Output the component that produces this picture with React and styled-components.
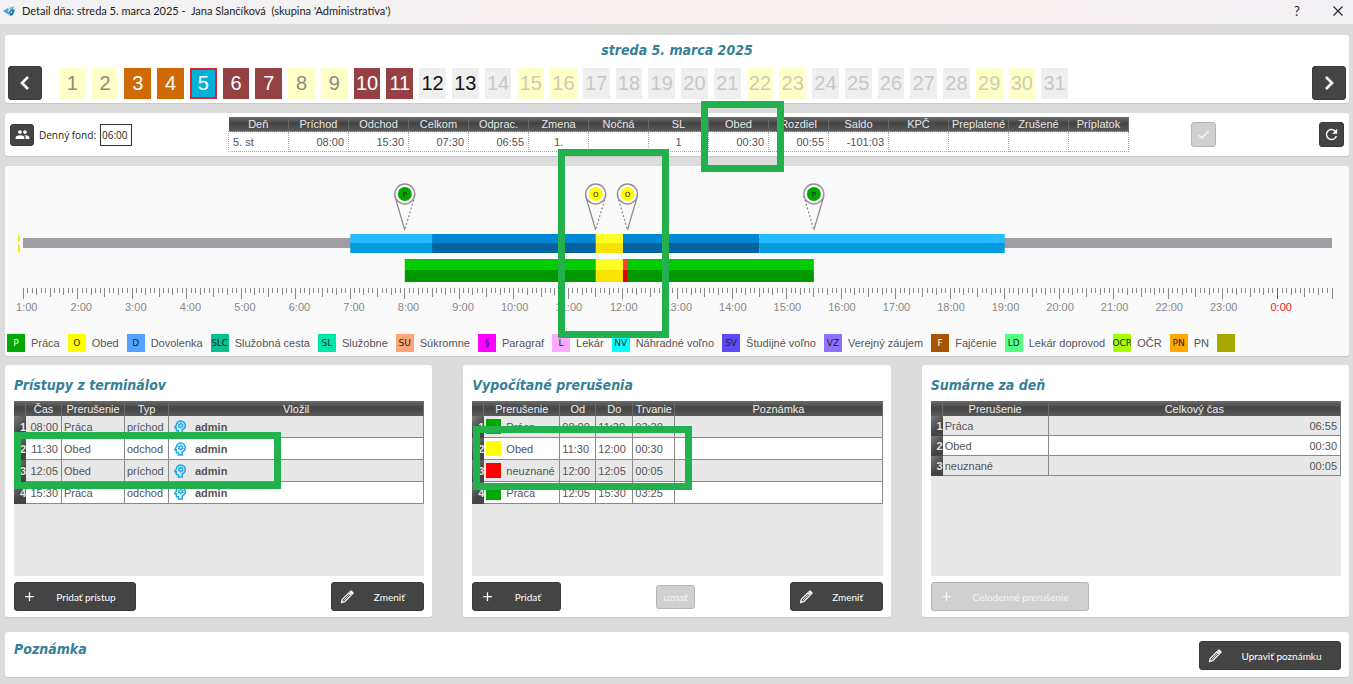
import React, { useState } from 'react';
import styled, { createGlobalStyle, css } from 'styled-components';
import { MdGroup, MdCheck, MdRefresh, MdAdd, MdOutlinePsychology } from 'react-icons/md';

const GlobalStyle = createGlobalStyle`
	*, *::before, *::after {
		box-sizing: border-box;
	}
	body {
		margin: 0;
		background: #dcdcdc;
		font-family: 'Liberation Sans', Arial, sans-serif;
		font-size: 11px;
		color: #555;
	}
	button, input {
		font: inherit;
		margin: 0;
	}
`;

const TitleBar = styled.header`
	display: flex;
	align-items: center;
	height: 24px;
	padding: 0 10px 3px 3px;
	background: linear-gradient(90deg, #f1f2f5, #f8f0ef 50%, #f8efef 70%, #f2f1f5);
	color: #222;
	font-family: Lato, 'Open Sans', sans-serif;
`;

const WindowTitle = styled.h1`
	flex: 1;
	margin: 0 0 0 5px;
	font-size: 11px;
	font-weight: 400;
	white-space: pre;
`;

const WindowButton = styled.button`
	display: flex;
	align-items: center;
	justify-content: center;
	width: 10px;
	height: 20px;
	margin-left: 31px;
	padding: 0;
	border: 0;
	background: none;
	color: #222;
	font-size: 13px;
`;

const Page = styled.main`
	display: flex;
	flex-direction: column;
	gap: 10px;
	padding: 11px 4px 7px 5px;
`;

const Panel = styled.section`
	border-radius: 3px;
	background: #fff;
	box-shadow: 0 1px 1px #c8c8c8;
`;

const Heading = styled.h2`
	margin: 0;
	color: #358097;
	font-family: 'DejaVu Sans Condensed', 'DejaVu Sans', sans-serif;
	font-size: 14px;
	font-stretch: condensed;
	font-style: italic;
	font-weight: 700;
	line-height: 16px;
`;

const CalendarPanel = styled(Panel)`
	height: 68px;
	padding: 7px 3px 3px;
	text-align: center;
`;

const CalendarRow = styled.div`
	display: flex;
	align-items: center;
	margin-top: 8px;
`;

const DarkButton = styled.button`
	display: flex;
	align-items: center;
	justify-content: center;
	flex: none;
	width: ${({ $w }) => $w}px;
	height: ${({ $h }) => $h}px;
	padding: 0;
	border: 1px solid #3a3a3a;
	border-radius: 3px;
	background: #444;
	color: #fff;

	&:disabled {
		border-color: #b4b4b4;
		background: #d0d0d0;
		color: #f4f4f4;
	}
`;

const Days = styled.div`
	flex: 1;
	display: grid;
	grid-template-columns: repeat(31, 1fr);
	gap: 6px;
	margin: 0 244px 0 17px;
`;

const dayColors = {
	weekend: ['#ffffc8', '#8c8c7c'],
	orange: ['#d06a04', '#fff'],
	red: ['#954143', '#fff'],
	current: ['#00b0d8', '#fff'],
	plain: ['#efefef', '#111'],
	future: ['#efefef', '#c8c8c8'],
	futureWeekend: ['#ffffc8', '#cdcdb4'],
};

const Day = styled.button`
	height: 31px;
	padding: 0;
	border: ${({ $type }) => ($type === 'current' ? '2px solid #e0202c' : '0')};
	background: ${({ $type }) => dayColors[$type][0]};
	color: ${({ $type }) => dayColors[$type][1]};
	font-size: 20px;
	line-height: 20px;
`;

const SummaryPanel = styled(Panel)`
	display: flex;
	align-items: center;
	height: 43px;
	padding: 0 5px;
`;

const FondLabel = styled.label`
	display: flex;
	align-items: center;
	gap: 4px;
	width: 194px;
	padding-left: 5px;
	color: #222;
	font-family: 'Open Sans', 'Noto Sans', sans-serif;
	font-size: 10px;
`;

const FondInput = styled.input`
	width: 32px;
	height: 22px;
	padding: 0 1px;
	border: 1px solid #333;
	background: #fff;
	color: #222;
`;

const Spacer = styled.div`
	flex: ${({ $grow = 1 }) => $grow};
`;

const TableWrap = styled.div`
	position: relative;
`;

const headBackground = 'linear-gradient(#6c6c6c, #444 45%, #5a5a5a)';

const SummaryTable = styled.table`
	width: 901px;
	border-collapse: collapse;
	table-layout: fixed;

	th {
		height: 15px;
		padding: 0;
		background: ${headBackground};
		border-right: 1px solid #6a6a6a;
		color: #e8e8e8;
		font-weight: 400;
		line-height: 14px;
	}
	td {
		height: 20px;
		padding: 0 4px;
		border: 1px dotted #aaa;
		line-height: 14px;
		white-space: nowrap;
	}
`;

const SummaryCell = styled.td`
	text-align: ${({ $align }) => $align || 'right'};
`;

// green frame drawn over the parts being explained
const Highlight = styled.div`
	position: absolute;
	z-index: 2;
	border: 7px solid #22b14c;
	pointer-events: none;
	${({ $box: [left, top, width, height] }) => css`
		left: ${left}px;
		top: ${top}px;
		width: ${width}px;
		height: ${height}px;
	`}
`;

const RangeHighlight = styled.div`
	position: absolute;
	z-index: 2;
	top: -17px;
	height: 189px;
	border: 7px solid #22b14c;
	pointer-events: none;
`;

const TimelinePanel = styled(Panel)`
	height: 190px;
	margin-bottom: -1px;
	background: #fafafa;
`;

const ChartArea = styled.div`
	position: relative;
	margin: 0 17px 0 18px;
`;

const Chart = styled.svg`
	display: block;
	width: 100%;
	height: 168px;
	overflow: visible;
`;

const AxisText = styled.text`
	fill: ${({ $red }) => ($red ? '#e81c24' : '#888')};
	font-size: 11px;
`;

const PinText = styled.text`
	fill: #222;
	font-family: 'DejaVu Sans', sans-serif;
	font-size: 7px;
	text-anchor: middle;
`;

const Legend = styled.ul`
	display: flex;
	gap: 8px;
	margin: 0;
	padding: 0 2px;
	list-style: none;
`;

const LegendItem = styled.li`
	display: flex;
	align-items: center;
	gap: 6px;
	white-space: nowrap;
`;

const LegendMark = styled.span`
	display: flex;
	justify-content: center;
	width: 18px;
	height: 18px;
	overflow: hidden;
	background: ${({ $color }) => $color};
	color: ${({ $light }) => ($light ? '#fff' : '#222')};
	font-family: 'DejaVu Sans', sans-serif;
	font-size: 9px;
	line-height: 19px;
`;

const Cards = styled.div`
	display: grid;
	grid-template-columns: repeat(3, 1fr);
	gap: 31px;
`;

const Card = styled(Panel)`
	display: flex;
	flex-direction: column;
	height: 252px;
	padding: 12px 8px 6px 9px;
`;

const TableArea = styled.div`
	position: relative;
	flex: 1;
	margin: 8px 0 6px;
	background: #e8e8e8;
`;

const DataTable = styled.table`
	width: 100%;
	border-collapse: separate;
	border-spacing: 0;
	table-layout: fixed;

	thead th {
		height: 15px;
		padding: 0;
		background: ${headBackground};
		border-right: 1px solid #6a6a6a;
		color: #eee;
		font-weight: 400;
		line-height: 14px;
		white-space: nowrap;
	}
	tbody th {
		padding: 0;
		background: linear-gradient(135deg, #7c7c7c, #444 60%);
		color: #e4e4e4;
		font-weight: 700;
		text-align: right;
		line-height: 14px;
	}
	td {
		height: ${({ $row }) => $row}px;
		padding: 0 2px;
		border-right: 1px solid #888;
		border-bottom: 1px solid #888;
		line-height: 14px;
		white-space: nowrap;
	}
	tbody tr:nth-child(even) td {
		background: #fff;
	}
`;

const NumberCell = styled.td`
	&& {
		padding-right: 3px;
	}
	text-align: right;
`;

const IconCell = styled.div`
	display: flex;
	align-items: center;
	gap: ${({ $gap }) => $gap}px;

	svg {
		flex: none;
		color: #1ca8f0;
	}
`;

const Swatch = styled.span`
	flex: none;
	width: 15px;
	height: 15px;
	background: ${({ $color }) => $color};
`;

const Actions = styled.div`
	display: flex;
	align-items: center;
	justify-content: space-between;
`;

const ActionButton = styled(DarkButton)`
	justify-content: flex-start;
	padding-left: 7px;
	font-family: Lato, 'Open Sans', sans-serif;
	font-size: 10px;

	span {
		flex: 1;
		text-align: center;
	}
`;

const SmallButton = styled(DarkButton)`
	font-family: Lato, 'Open Sans', sans-serif;
	font-size: 10px;
`;

const NotePanel = styled(Panel)`
	display: flex;
	align-items: flex-start;
	justify-content: space-between;
	height: 45px;
	margin-top: 5px;
	padding: 9px 8px 6px 9px;
`;

const dayType = (day) => {
	if (day === 5) return 'current';
	if (day === 3 || day === 4) return 'orange';
	if ([6, 7, 10, 11].includes(day)) return 'red';
	if ([1, 2, 8, 9].includes(day)) return 'weekend';
	if (day === 12 || day === 13) return 'plain';
	return [15, 16, 22, 23, 29, 30].includes(day) ? 'futureWeekend' : 'future';
};

const summary = [
	['Deň', '5. st', 'left'],
	['Príchod', '08:00'],
	['Odchod', '15:30'],
	['Celkom', '07:30'],
	['Odprac.', '06:55'],
	['Zmena', '1.', 'center'],
	['Nočná', ''],
	['SL', '1', 'center'],
	['Obed', '00:30'],
	['Rozdiel', '00:55'],
	['Saldo', '-101:03'],
	['KPČ', ''],
	['Preplatené', ''],
	['Zrušené', ''],
	['Príplatok', ''],
];

const legend = [
	['P', 'Práca', '#00a800', true],
	['O', 'Obed', '#ffff00'],
	['D', 'Dovolenka', '#54a4ff'],
	['SLC', 'Služobná cesta', '#08c090'],
	['SL', 'Služobne', '#00e8a8'],
	['SU', 'Súkromne', '#ffa478'],
	['§', 'Paragraf', '#ff00ff'],
	['L', 'Lekár', '#ffa8ff'],
	['NV', 'Náhradné voľno', '#00ffff'],
	['SV', 'Študijné voľno', '#5c4cf8'],
	['VZ', 'Verejný záujem', '#9070ff'],
	['F', 'Fajčenie', '#a85400', true],
	['LD', 'Lekár doprovod', '#54ff84'],
	['OCR', 'OČR', '#a8ff00'],
	['PN', 'PN', '#ffa800'],
	['', '', '#a8a800'],
];

const accesses = [
	['08:00', 'Práca', 'príchod'],
	['11:30', 'Obed', 'odchod'],
	['12:05', 'Obed', 'príchod'],
	['15:30', 'Práca', 'odchod'],
];

const breaks = [
	['#00a800', 'Práca', '08:00', '11:30', '03:30'],
	['#ffff00', 'Obed', '11:30', '12:00', '00:30'],
	['#ff0000', 'neuznané', '12:00', '12:05', '00:05'],
	['#00a800', 'Práca', '12:05', '15:30', '03:25'],
];

const totals = [
	['Práca', '06:55'],
	['Obed', '00:30'],
	['neuznané', '00:05'],
];

// the axis runs from 1:00 to 1:00 of the next day
const AXIS_START = 1;
const AXIS_HOURS = 24;
const pos = (hour) => `${((hour - AXIS_START) / AXIS_HOURS) * 100}%`;
const span = (from, to) => `${((to - from) / AXIS_HOURS) * 100}%`;

const Bar = ({ from, to, y, height, light, dark }) => {
	const half = Math.floor(height / 2);

	return (
		<>
			<rect x={pos(from)} y={y} width={span(from, to)} height={half} fill={light} />
			<rect x={pos(from)} y={y + half} width={span(from, to)} height={height - half} fill={dark} />
		</>
	)
}

const Pin = ({ hour, letter, color, leaving }) => {
	const dash = '2 2';

	return (
		<svg x={pos(hour)} y='17' overflow='visible'>
			<path d='M-10 13 L0 47' stroke='#888' strokeWidth='1.2' fill='none' strokeDasharray={leaving ? dash : undefined} />
			<path d='M10 13 L0 47' stroke='#888' strokeWidth='1.2' fill='none' strokeDasharray={leaving ? undefined : dash} />
			<circle cx='0' cy='11' r='10' fill='#fff' stroke='#928c98' strokeWidth='1.4' />
			<circle cx='0' cy='11' r='7' fill={color} />
			<PinText x='0' y='14'>{letter}</PinText>
		</svg>
	)
}

const tickLength = (i) => {
	if (i % 12 === 0) return 11;
	if (i % 6 === 0) return 9;
	return i % 3 === 0 ? 7 : 5;
};

const Timeline = () => {
	const ticks = Array.from({ length: AXIS_HOURS * 12 + 1 }, (_, i) => i);
	const hours = Array.from({ length: AXIS_HOURS }, (_, i) => i + AXIS_START);

	return (
		<ChartArea>
			<Chart>
				<path d='M-5 68 L-3 70 L-3 75 L-5 76 Z M-5 78 L-3 80 L-3 85 L-5 87 Z' fill='#ecec10' />
				<rect x='0' y='72' width='100%' height='10' fill='#a09ea2' />
				<Bar from={7} to={8.5} y={68} height={19} light='#24bcff' dark='#009cdc' />
				<Bar from={8.5} to={14.5} y={68} height={19} light='#0088d4' dark='#0064a0' />
				<Bar from={14.5} to={19} y={68} height={19} light='#24bcff' dark='#009cdc' />
				<Bar from={11.5} to={12} y={68} height={19} light='#ffff24' dark='#f8e400' />
				<Bar from={8} to={15.5} y={93} height={23} light='#00cc00' dark='#009800' />
				<Bar from={11.5} to={12} y={93} height={23} light='#ffff24' dark='#f8e400' />
				<Bar from={12} to={12.083} y={93} height={23} light='#ff4030' dark='#e00000' />
				<Pin hour={8} letter='P' color='#00a800' />
				<Pin hour={11.5} letter='O' color='#ffff00' />
				<Pin hour={12.083} letter='O' color='#ffff00' leaving />
				<Pin hour={15.5} letter='P' color='#00a800' leaving />
				{ticks.map(i => (
					<line
						key={i}
						x1={pos(AXIS_START + i / 12)}
						x2={pos(AXIS_START + i / 12)}
						y1='122'
						y2={122 + tickLength(i)}
						stroke={i === 276 ? '#e81c24' : '#888'}
						shapeRendering='crispEdges'
					/>
				))}
				{hours.map(h => (
					<AxisText key={h} x={pos(h)} y='145' dx={h < 10 || h === 24 ? -7 : -13} $red={h === 24}>
						{h % 24}:00
					</AxisText>
				))}
			</Chart>
			<RangeHighlight style={{ left: pos(10.81), width: span(10.81, 12.84) }} />
		</ChartArea>
	)
}

const Chevron = ({ d }) => (
	<svg width='12' height='16' viewBox='0 0 12 16' fill='none' stroke='#fff' strokeWidth='2.6'>
		<path d={d} />
	</svg>
)

const Cross = () => (
	<svg width='10' height='10' viewBox='0 0 10 10' stroke='#222' strokeWidth='1.1'>
		<path d='M0.5 0.5 L9.5 9.5 M9.5 0.5 L0.5 9.5' />
	</svg>
)

const Pencil = () => (
	<svg width='16' height='16' viewBox='0 0 16 16' fill='none' stroke='#f4f4f4' strokeWidth='1.3' strokeLinejoin='round'>
		<path d='M2.5 13.5 L3.3 10.4 L10 3.7 L12.3 6 L5.6 12.7 Z' />
		<path d='M4.6 11.4 L11 5' strokeWidth='0.8' />
		<path d='M11 2.7 L12 1.9 L14.1 4 L13.3 5 Z' fill='#fff' />
	</svg>
)

const Logo = () => (
	<svg width='14' height='14' viewBox='0 0 14 14'>
		<path d='M0 7 L5 4 L6 6 L4.5 7 L7 9 L6 11 Z' fill='#4ba3cf' />
		<path d='M6 4 L11 2 L10 5 L8 6 Z' fill='#6cb4d8' />
		<path d='M6 7 L9 5 L12 6 L10 11 L7 12 Z' fill='#2c7ca8' />
		<path d='M7 8 L9 7 L9 9 Z' fill='#d4ecf8' />
	</svg>
)

const App = () => {
	const [fond, setFond] = useState('06:00');

	return (
		<>
			<GlobalStyle />
			<TitleBar>
				<Logo />
				<WindowTitle>{"Detail dňa: streda 5. marca 2025 -  Jana Slančíková  (skupina 'Administratíva')"}</WindowTitle>
				<WindowButton aria-label='Pomocník'>?</WindowButton>
				<WindowButton aria-label='Zavrieť'><Cross /></WindowButton>
			</TitleBar>
			<Page>
				<CalendarPanel>
					<Heading>streda 5. marca 2025</Heading>
					<CalendarRow>
						<DarkButton $w={34} $h={34} aria-label='Predchádzajúci deň'><Chevron d='M9 2 L3 8 L9 14' /></DarkButton>
						<Days>
							{Array.from({ length: 31 }, (_, i) => (
								<Day key={i} $type={dayType(i + 1)}>{i + 1}</Day>
							))}
						</Days>
						<DarkButton $w={34} $h={34} aria-label='Nasledujúci deň'><Chevron d='M3 2 L9 8 L3 14' /></DarkButton>
					</CalendarRow>
				</CalendarPanel>

				<SummaryPanel>
					<DarkButton $w={24} $h={22} aria-label='Skupina'><MdGroup size={15} /></DarkButton>
					<FondLabel>
						Denný fond:
						<FondInput value={fond} onChange={e => setFond(e.target.value)} />
					</FondLabel>
					<TableWrap>
						<SummaryTable>
							<thead>
								<tr>{summary.map(([name]) => <th key={name}>{name}</th>)}</tr>
							</thead>
							<tbody>
								<tr>
									{summary.map(([name, value, align]) => (
										<SummaryCell key={name} $align={align}>{value}</SummaryCell>
									))}
								</tr>
							</tbody>
						</SummaryTable>
						<Highlight $box={[473, -16, 83, 71]} />
					</TableWrap>
					<Spacer $grow={6} />
					<DarkButton $w={25} $h={25} disabled aria-label='Potvrdiť'><MdCheck size={15} /></DarkButton>
					<Spacer $grow={10} />
					<DarkButton $w={25} $h={25} aria-label='Obnoviť'><MdRefresh size={17} /></DarkButton>
				</SummaryPanel>

				<TimelinePanel>
					<Timeline />
					<Legend>
						{legend.map(([code, name, color, light]) => (
							<LegendItem key={color}>
								<LegendMark $color={color} $light={light}>{code}</LegendMark>
								{name}
							</LegendItem>
						))}
					</Legend>
				</TimelinePanel>

				<Cards>
					<Card>
						<Heading>Prístupy z terminálov</Heading>
						<TableArea>
							<DataTable $row={22}>
								<colgroup>
									<col width='12' /><col width='36' /><col width='63' /><col width='44' /><col />
								</colgroup>
								<thead>
									<tr><th /><th>Čas</th><th>Prerušenie</th><th>Typ</th><th>Vložil</th></tr>
								</thead>
								<tbody>
									{accesses.map(([time, name, type], i) => (
										<tr key={time}>
											<th>{i + 1}</th>
											<NumberCell>{time}</NumberCell>
											<td>{name}</td>
											<td>{type}</td>
											<td><IconCell $gap={6}><MdOutlinePsychology size={18} /><b>admin</b></IconCell></td>
										</tr>
									))}
								</tbody>
							</DataTable>
							<Highlight $box={[0, 31, 267, 57]} />
						</TableArea>
						<Actions>
							<ActionButton $w={122} $h={29}><MdAdd size={15} /><span>Pridať prístup</span></ActionButton>
							<ActionButton $w={93} $h={29}><Pencil /><span>Zmeniť</span></ActionButton>
						</Actions>
					</Card>

					<Card>
						<Heading>Vypočítané prerušenia</Heading>
						<TableArea>
							<DataTable $row={22}>
								<colgroup>
									<col width='12' /><col width='76' /><col width='36' /><col width='37' /><col width='42' /><col />
								</colgroup>
								<thead>
									<tr><th /><th>Prerušenie</th><th>Od</th><th>Do</th><th>Trvanie</th><th>Poznámka</th></tr>
								</thead>
								<tbody>
									{breaks.map(([color, name, from, to, length], i) => (
										<tr key={from}>
											<th>{i + 1}</th>
											<td><IconCell $gap={5}><Swatch $color={color} />{name}</IconCell></td>
											<td>{from}</td>
											<td>{to}</td>
											<td>{length}</td>
											<td />
										</tr>
									))}
								</tbody>
							</DataTable>
							<Highlight $box={[1, 25, 219, 64]} />
						</TableArea>
						<Actions>
							<ActionButton $w={89} $h={29}><MdAdd size={15} /><span>Pridať</span></ActionButton>
							<SmallButton $w={39} $h={24} disabled>uznať</SmallButton>
							<ActionButton $w={93} $h={29}><Pencil /><span>Zmeniť</span></ActionButton>
						</Actions>
					</Card>

					<Card>
						<Heading>Sumárne za deň</Heading>
						<TableArea>
							<DataTable $row={20}>
								<colgroup>
									<col width='12' /><col width='106' /><col />
								</colgroup>
								<thead>
									<tr><th /><th>Prerušenie</th><th>Celkový čas</th></tr>
								</thead>
								<tbody>
									{totals.map(([name, total], i) => (
										<tr key={name}>
											<th>{i + 1}</th>
											<td>{name}</td>
											<NumberCell>{total}</NumberCell>
										</tr>
									))}
								</tbody>
							</DataTable>
						</TableArea>
						<Actions>
							<ActionButton $w={158} $h={29} disabled><MdAdd size={15} /><span>Celodenné prerušenie</span></ActionButton>
						</Actions>
					</Card>
				</Cards>

				<NotePanel>
					<Heading>Poznámka</Heading>
					<ActionButton $w={142} $h={29}><Pencil /><span>Upraviť poznámku</span></ActionButton>
				</NotePanel>
			</Page>
		</>
	)
}

export default App;
